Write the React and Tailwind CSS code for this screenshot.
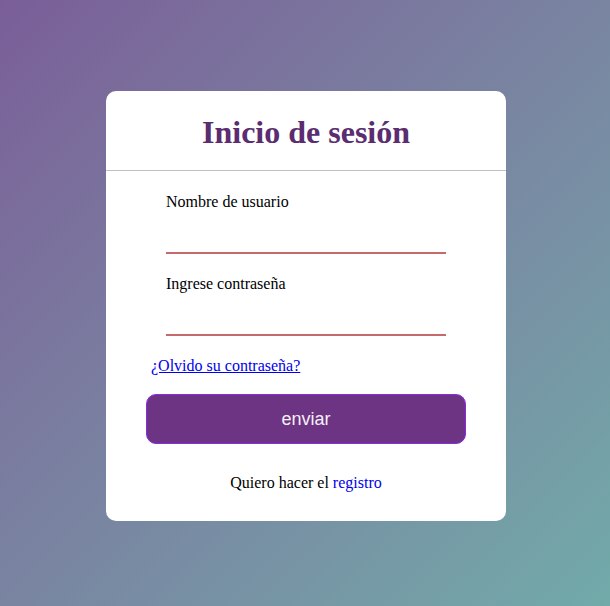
export default function App() {
    return (
        <div className="min-h-[606px] w-full bg-linear-to-br from-[#7a5e98] to-[#71aaa9] flex justify-center pt-[91px] font-['Liberation_Serif',serif]">
            <div className="ml-[2px] w-[400px] h-[430px] bg-white rounded-[10px] flex flex-col">
                {/* Header */}
                <div className="pt-[23px] pb-5 border-b border-[#c0c0c0]">
                    <h1 className="text-center text-[32px] leading-[36px] font-bold text-[#5b2c6f]">
                        Inicio de sesión
                    </h1>
                </div>

                {/* Form */}
                <form className="flex flex-col px-10" onSubmit={(e) => e.preventDefault()}>
                    <label className="mt-[22px] ml-5 text-[16px] leading-[18px] text-black">Nombre de usuario</label>
                    <input type="text" className="ml-5 w-[280px] h-[43px] border-b-2 border-[#c46a6a] outline-none bg-transparent" />

                    <label className="mt-[21px] ml-5 text-[16px] leading-[18px] text-black">Ingrese contraseña</label>
                    <input type="password" className="ml-5 w-[280px] h-[43px] border-b-2 border-[#c46a6a] outline-none bg-transparent" />

                    <a href="#" className="mt-[21px] ml-[5px] self-start text-[16px] leading-[18px] text-[#0000ee] underline">
                        ¿Olvido su contraseña?
                    </a>

                    <button type="submit" className="mt-[19px] w-[320px] h-[50px] rounded-[10px] bg-[#6d3483] border border-[#8a2be2] text-[#f4f0f6] text-[18px] font-['Liberation_Sans',sans-serif]">
                        enviar
                    </button>

                    <p className="mt-[30px] text-center text-[16px] leading-[18px] text-black">
                        Quiero hacer el <a href="#" className="text-[#0000ee]">registro</a>
                    </p>
                </form>
            </div>
        </div>
    );
}
